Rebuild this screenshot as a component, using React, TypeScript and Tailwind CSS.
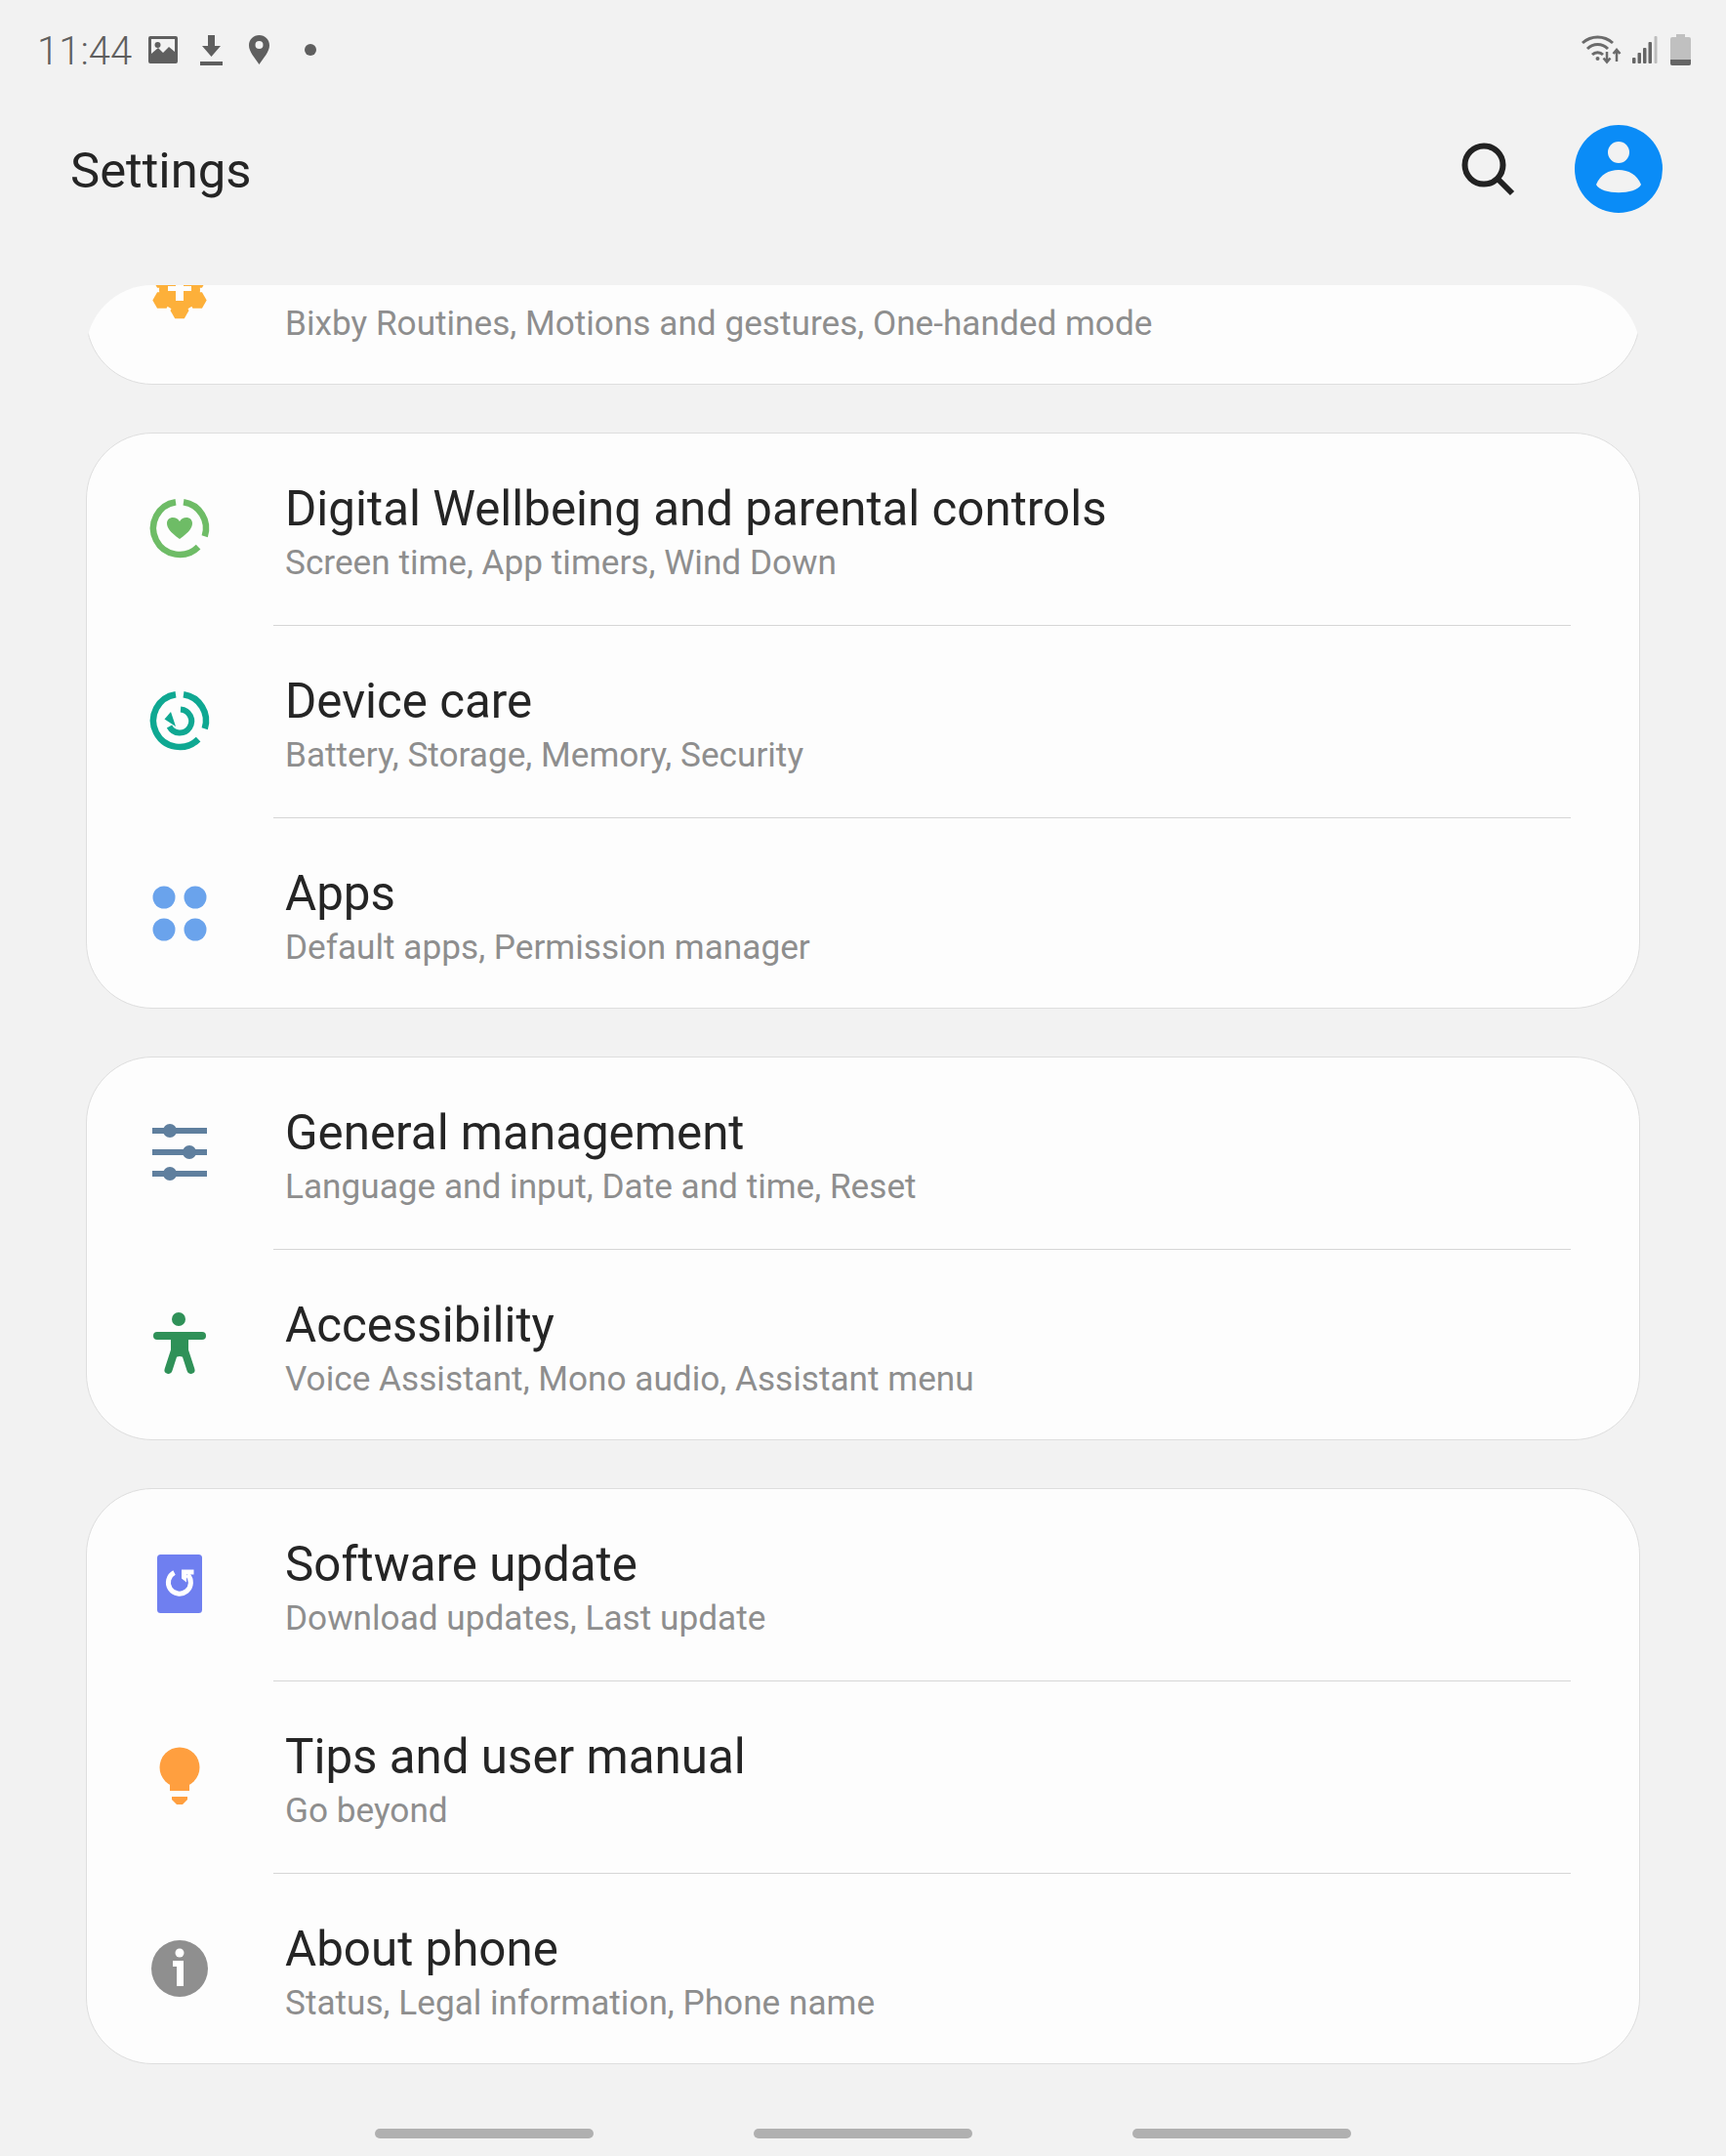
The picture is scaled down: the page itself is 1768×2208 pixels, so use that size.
import React from "react";

function GearIcon() {
  const hex = (cx: number, cy: number, r: number) =>
    [0, 60, 120, 180, 240, 300]
      .map((a) => `${cx + r * Math.cos((a * Math.PI) / 180)},${cy + r * Math.sin((a * Math.PI) / 180)}`)
      .join(" ");
  const lobes = [30, 90, 150, 210, 270, 330];
  return (
    <svg width="80" height="80" viewBox="0 0 80 80">
      <circle cx="40" cy="41" r="21" fill="#fdb03a" />
      {lobes.map((a) => (
        <polygon
          key={a}
          points={hex(40 + 21 * Math.cos((a * Math.PI) / 180), 41 + 21 * Math.sin((a * Math.PI) / 180), 9.500)}
          fill="#fdb03a"
        />
      ))}
      <path d="M28 37h24v5H28zM36 28h8v24h-8z" fill="#fdfdfd" />
    </svg>
  );
}

function RingIcon({ color, children }: { color: string; children: React.ReactNode }) {
  return (
    <svg width="80" height="80" viewBox="0 0 80 80">
      <g fill="none" stroke={color} strokeWidth="6.5">
        <path d="M44 13.3A27 27 0 0 1 65.7 48.3" />
        <path d="M59.1 59.1A27 27 0 1 1 36 13.3" />
      </g>
      {children}
    </svg>
  );
}

function WellbeingIcon() {
  return (
    <RingIcon color="#6ebc66">
      <path
        d="M40 51C30 44 27 39 27 35C27 31 30 29 33 29C36 29 38.5 30.5 40 33C41.5 30.5 44 29 47 29C50 29 53 31 53 35C53 39 50 44 40 51Z"
        fill="#6ebc66"
      />
    </RingIcon>
  );
}

function DeviceCareIcon() {
  return (
    <RingIcon color="#0fa892">
      <path d="M41 28.500A12 12 0 1 1 29.500 46" fill="none" stroke="#0fa892" strokeWidth="6" />
      <polygon points="24.500,38.500 31,31 36,46" fill="#0fa892" />
    </RingIcon>
  );
}

function AppsIcon() {
  return (
    <svg width="80" height="80" viewBox="0 0 80 80" fill="#6aa3ec">
      <circle cx="24" cy="24" r="11.500" />
      <circle cx="56" cy="24" r="11.500" />
      <circle cx="24" cy="57" r="11.500" />
      <circle cx="56" cy="57" r="11.500" />
    </svg>
  );
}

function SlidersIcon() {
  return (
    <svg width="80" height="80" viewBox="0 0 80 80" fill="#5f7f9e">
      <rect x="12" y="15" width="56" height="6" />
      <rect x="12" y="37" width="56" height="6" />
      <rect x="12" y="59" width="56" height="6" />
      <circle cx="30" cy="18" r="7" />
      <circle cx="50" cy="40" r="7" />
      <circle cx="30" cy="62" r="7" />
    </svg>
  );
}

function AccessibilityIcon() {
  return (
    <svg width="80" height="80" viewBox="0 0 80 80" fill="#2f9158">
      <circle cx="39" cy="14" r="7" />
      <rect x="13" y="27" width="54" height="8" rx="4" />
      <path d="M31 30h18v17l-4 6-5-1-5 1-4-6z" />
      <path d="M35 46L28.500 66M45 46L51.500 66" fill="none" stroke="#2f9158" strokeWidth="8" strokeLinecap="round" />
    </svg>
  );
}

function UpdateIcon() {
  return (
    <svg width="80" height="80" viewBox="0 0 80 80">
      <rect x="17" y="10" width="46" height="60" rx="3.500" fill="#6f7ff0" />
      <path d="M48 30.500A11.500 11.500 0 1 1 34.500 28.500" fill="none" stroke="#fff" strokeWidth="5" />
      <path d="M42 25.500h12.500v5h-7.500v8l-5-4z" fill="#fff" />
    </svg>
  );
}

function BulbIcon() {
  return (
    <svg width="80" height="80" viewBox="0 0 80 80" fill="#ff9f3f">
      <circle cx="40" cy="31" r="20.500" />
      <path d="M30 45h20v10H30z" />
      <path d="M32 61h16v3l-5 5h-6l-5-5z" />
    </svg>
  );
}

function InfoIcon() {
  return (
    <svg width="80" height="80" viewBox="0 0 80 80">
      <circle cx="40" cy="40" r="29" fill="#8f8f8f" />
      <circle cx="40" cy="24" r="4.500" fill="#fff" />
      <path d="M33 32h11v26h-7V38h-4z" fill="#fff" />
    </svg>
  );
}

const groups = [
  [{ icon: <GearIcon />, title: "Advanced features", sub: "Bixby Routines, Motions and gestures, One-handed mode" }],
  [
    { icon: <WellbeingIcon />, title: "Digital Wellbeing and parental controls", sub: "Screen time, App timers, Wind Down" },
    { icon: <DeviceCareIcon />, title: "Device care", sub: "Battery, Storage, Memory, Security" },
    { icon: <AppsIcon />, title: "Apps", sub: "Default apps, Permission manager" },
  ],
  [
    { icon: <SlidersIcon />, title: "General management", sub: "Language and input, Date and time, Reset" },
    { icon: <AccessibilityIcon />, title: "Accessibility", sub: "Voice Assistant, Mono audio, Assistant menu" },
  ],
  [
    { icon: <UpdateIcon />, title: "Software update", sub: "Download updates, Last update" },
    { icon: <BulbIcon />, title: "Tips and user manual", sub: "Go beyond" },
    { icon: <InfoIcon />, title: "About phone", sub: "Status, Legal information, Phone name" },
  ],
];

function StatusBar() {
  return (
    <div className="h-[102px] pl-[38px] pr-[36px] flex items-center justify-between text-[#5f5f5f]">
      <div className="flex items-center">
        <span className="text-[40px] font-light leading-none w-[114px] pt-[3px]">11:44</span>
        <svg width="30" height="28" viewBox="0 0 30 28" fill="#5f5f5f">
          <path d="M2 0h26a2 2 0 0 1 2 2v24a2 2 0 0 1-2 2H2a2 2 0 0 1-2-2V2a2 2 0 0 1 2-2zM3 3v15l7-6 5 5 6-6 6 5V3z" />
          <circle cx="9.500" cy="9" r="3" />
        </svg>
        <svg className="ml-[23px]" width="23" height="31" viewBox="0 0 23 31" fill="#5f5f5f">
          <path d="M8 0h7v11h6L11.500 22 2 11h6zM0 27h23v4H0z" />
        </svg>
        <svg className="ml-[27px]" width="21" height="30" viewBox="0 0 21 30" fill="#5f5f5f">
          <path d="M10.500 0C4.700 0 0 4.600 0 10.400 0 17 6 23 10.500 30 15 23 21 17 21 10.400 21 4.600 16.300 0 10.500 0zm0 14a4 4 0 1 1 0-8 4 4 0 0 1 0 8z" />
        </svg>
        <div className="ml-[36px] w-[12px] h-[12px] rounded-full bg-[#5f5f5f]" />
      </div>
      <div className="flex items-center">
        <svg width="42" height="32" viewBox="0 0 42 32" fill="none" stroke="#6b6b6b" strokeWidth="3">
          <path d="M2 9C11 1 24 1 33 9" />
          <path d="M7 15C13 9 22 9 28 15" />
          <path d="M12 21C15 18 20 18 23 21" />
          <circle cx="17.500" cy="25" r="2" fill="#6b6b6b" stroke="none" />
          <path d="M27 18v10M23.500 24.500l3.500 4 3.500-4" strokeWidth="2.500" />
          <path d="M37 28V16M33.500 20l3.500-4 3.500 4" strokeWidth="2.500" />
        </svg>
        <svg className="ml-[11px]" width="26" height="28" viewBox="0 0 26 28">
          <rect x="0" y="22" width="3.500" height="6" rx="1" fill="#666" />
          <rect x="5.500" y="17" width="3.500" height="11" rx="1" fill="#666" />
          <rect x="11" y="12" width="3.500" height="16" rx="1" fill="#666" />
          <rect x="16.500" y="6" width="3.500" height="22" rx="1" fill="#666" />
          <rect x="22.500" y="0" width="3" height="28" rx="1" fill="#bdbdbd" />
        </svg>
        <svg className="ml-[13px]" width="21" height="32" viewBox="0 0 21 32">
          <path d="M6 0h9v3h4a2 2 0 0 1 2 2v25a2 2 0 0 1-2 2H2a2 2 0 0 1-2-2V5a2 2 0 0 1 2-2h4z" fill="#c0c0c0" />
          <path d="M0 26h21v4a2 2 0 0 1-2 2H2a2 2 0 0 1-2-2z" fill="#666" />
        </svg>
      </div>
    </div>
  );
}

function Header() {
  return (
    <div className="h-[144px] mb-[46px] pl-[72px] pr-[65px] flex items-center justify-between">
      <div className="text-[50.800px] leading-none text-[#252525] pt-[2px]">Settings</div>
      <div className="flex items-center mb-[3px]">
        <svg className="mt-[3px]" width="56" height="56" viewBox="0 0 56 56" fill="none" stroke="#222" strokeWidth="6">
          <circle cx="23" cy="23" r="19.500" />
          <path d="M36 36L52 52" />
        </svg>
        <div className="ml-[60px] w-[90px] h-[90px] rounded-full bg-[#0a8cf7] flex items-center justify-center">
          <svg width="90" height="90" viewBox="0 0 90 90" fill="#f2f2f2">
            <circle cx="45" cy="28" r="11" />
            <path d="M22 61C26 51 35 46 45 46C55 46 64 51 68 61C63 72 27 72 22 61Z" />
          </svg>
        </div>
      </div>
    </div>
  );
}

export default function App() {
  return (
    <div className="w-[1768px] h-[2208px] overflow-hidden bg-[#f2f2f2]" style={{ fontFamily: "Roboto, sans-serif" }}>
      <StatusBar />
      <Header />
      <div className="mx-[88px] h-[1822px] overflow-hidden rounded-t-[68px] flex flex-col gap-[49px]">
        {groups.map((rows, g) => (
          <div
            key={g}
            className={`shrink-0 bg-[#fdfdfd] border border-[#dedede] rounded-[68px] ${g === 0 ? "-mt-[94px]" : ""}`}
          >
            {rows.map((r, i) => (
              <React.Fragment key={r.title}>
                {i > 0 && <div className="ml-[191px] mr-[70px] h-px bg-[#d6d6d6]" />}
                <div className={`pl-[55px] flex items-center ${i === rows.length - 1 ? "h-[194px]" : "h-[196px] pb-[2px]"}`}>
                  <div className="w-[80px] h-[80px] shrink-0">{r.icon}</div>
                  <div className={`ml-[68px] ${g === 0 ? "pt-[7px]" : "pt-[9px]"}`}>
                    <div className={`text-[49.300px] leading-[60px] text-[#252525] ${g === 0 ? "mb-[2px]" : ""}`}>{r.title}</div>
                    <div className="text-[35.200px] leading-[50px] text-[#8e8e8e]">{r.sub}</div>
                  </div>
                </div>
              </React.Fragment>
            ))}
          </div>
        ))}
      </div>
      <div className="mt-[66px] mx-auto w-[1164px] grid grid-cols-3 justify-items-center">
        <div className="w-[224px] h-[10px] rounded-full bg-[#b0b0b0]" />
        <div className="w-[224px] h-[10px] rounded-full bg-[#b0b0b0]" />
        <div className="w-[224px] h-[10px] rounded-full bg-[#b0b0b0]" />
      </div>
    </div>
  );
}
